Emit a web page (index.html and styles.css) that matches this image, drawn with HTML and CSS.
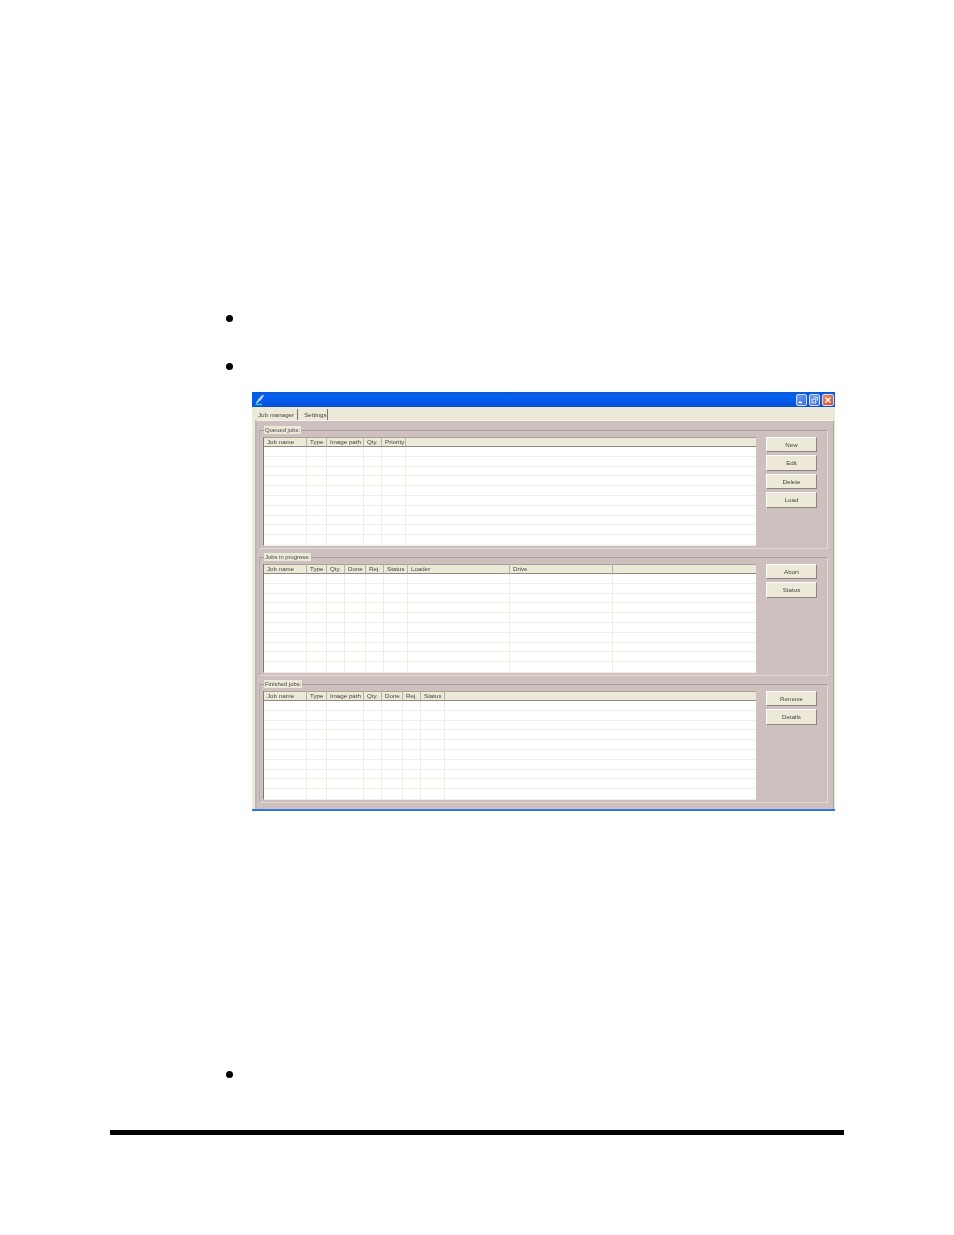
FILE: index.html
```html
<!DOCTYPE html>
<html lang="en">
<head>
    <meta charset="UTF-8">
    <meta name="viewport" content="width=device-width, initial-scale=1.0">
    <title>Job manager</title>
    <link rel="stylesheet" href="styles.css">
</head>
<body>

    <div class="page">
        <div class="bullet"></div>
        <div class="bullet"></div>

        <div class="window">
            <div class="title-bar">
                <!-- feather icon of the app -->
                <svg class="app-icon" width="10" height="12" viewBox="0 0 10 12">
                    <path d="M9 0.5 C6 1.5 3.5 4 2 8 L4 7.5 C6 6.5 8 4 9 0.5 Z" fill="#b9d4f2"/>
                    <path d="M3 7 L1.5 9.5" stroke="#e8f2fb" stroke-width="1.2"/>
                    <path d="M0.5 10.5 H7" stroke="#39c0c8" stroke-width="1.6"/>
                </svg>
                <div class="title-buttons">
                    <div class="title-btn">
                        <svg width="11" height="12" viewBox="0 0 11 12"><rect x="2" y="8" width="4" height="2" fill="#fff"/></svg>
                    </div>
                    <div class="title-btn">
                        <svg width="11" height="12" viewBox="0 0 11 12"><path d="M4.5 2.5 H9 V6.5 M2.5 5 H7 V9.5 H2.5 Z" fill="none" stroke="#fff"/></svg>
                    </div>
                    <div class="title-btn close">
                        <svg width="12" height="12" viewBox="0 0 12 12"><path d="M3 3 L9 9 M9 3 L3 9" stroke="#fff" stroke-width="1.6"/></svg>
                    </div>
                </div>
            </div>

            <div class="tabs">
                <div class="tab active">Job manager</div>
                <div class="tab">Settings</div>
            </div>

            <div class="pane">
                <fieldset class="group">
                    <legend>Queued jobs:</legend>
                    <div class="group-body">
                        <table class="job-table" id="queued"></table>
                        <div class="buttons">
                            <button>New</button>
                            <button>Edit</button>
                            <button>Delete</button>
                            <button>Load</button>
                        </div>
                    </div>
                </fieldset>

                <fieldset class="group">
                    <legend>Jobs in progress:</legend>
                    <div class="group-body">
                        <table class="job-table" id="progress"></table>
                        <div class="buttons">
                            <button>Abort</button>
                            <button>Status</button>
                        </div>
                    </div>
                </fieldset>

                <fieldset class="group">
                    <legend>Finished jobs:</legend>
                    <div class="group-body">
                        <table class="job-table" id="finished"></table>
                        <div class="buttons">
                            <button>Remove</button>
                            <button>Details</button>
                        </div>
                    </div>
                </fieldset>
            </div>
        </div>

        <div class="bullet last"></div>
        <div class="rule"></div>
    </div>

    <script>
        // name and width of each column, the last one takes the rest
        const tables = {
            queued: [['Job name', 43], ['Type', 20], ['Image path', 37], ['Qty.', 18], ['Priority', 24], ['', 0]],
            progress: [['Job name', 43], ['Type', 20], ['Qty.', 18], ['Done', 21], ['Rej.', 18], ['Status', 24], ['Loader', 102], ['Drive', 103], ['', 0]],
            finished: [['Job name', 43], ['Type', 20], ['Image path', 37], ['Qty.', 18], ['Done', 21], ['Rej.', 18], ['Status', 24], ['', 0]]
        };

        for (const id in tables) {
            const cols = tables[id];
            let html = '<thead><tr>';
            cols.forEach(function (col) {
                const width = col[1] ? ` style="width:${col[1]}px"` : '';
                html += `<th${width}>${col[0]}</th>`;
            });
            html += '</tr></thead><tbody>';
            for (let i = 0; i < 10; i++) {
                html += '<tr>' + '<td></td>'.repeat(cols.length) + '</tr>';
            }
            html += '</tbody>';
            document.getElementById(id).innerHTML = html;
        }
    </script>

</body>
</html>
```

FILE: styles.css
```css
body {
    margin: 0;
    background-color: #fff;
    font-family: "Liberation Sans", Arial, sans-serif;
}

.page {
    padding: 315px 110px 0;
}

.bullet {
    width: 7px;
    height: 7px;
    margin: 0 0 41px 116px;
    border-radius: 50%;
    background-color: #000;
}

.bullet.last {
    margin: 260px 0 0 116px;
}

.rule {
    height: 5px;
    margin-top: 52px;
    background-color: #000;
}

/* the screenshot of the program */
.window {
    width: 583px;
    height: 419px;
    margin: -19px 0 0 142px;
    box-sizing: border-box;
    background-color: #ece9d8;
    border-bottom: 2px solid #2f78d8;
    filter: blur(0.4px);
    color: #444;
    font-size: 6.2px;
}

.title-bar {
    display: flex;
    align-items: center;
    height: 15px;
    padding: 0 1px 0 3px;
    box-sizing: border-box;
    background: linear-gradient(#0a58d8, #0560f0 30%, #0458e8 70%, #0a4fd0);
}

.title-buttons {
    display: flex;
    gap: 2px;
    margin-left: auto;
}

.title-btn {
    display: flex;
    width: 11px;
    height: 12px;
    border: 1px solid #cfe0f8;
    border-radius: 2px;
    box-sizing: border-box;
    align-items: center;
    justify-content: center;
    background: linear-gradient(135deg, #6f9cec, #3a6fdc);
}

.title-btn.close {
    width: 12px;
    background: linear-gradient(135deg, #e88a68, #d0502c);
}

.tabs {
    display: flex;
    height: 13px;
    padding-left: 2px;
    box-sizing: border-box;
    align-items: center;
}

.tab {
    height: 11px;
    margin-top: 2px;
    padding-right: 1px;
    border-right: 1px solid #777;
    line-height: 11px;
    font-size: 6.2px;
}

.tab.active {
    padding: 0 3px 0 4px;
    margin-right: 6px;
}

.pane {
    height: 389px;
    padding: 6px 0 0;
    margin: 0 1px 0 3px;
    box-sizing: border-box;
    background-color: #cfc0c0;
    border-top: 1px solid #f4f2ea;
    border-left: 2px solid #bdb4bc;
    border-right: 1px solid #aca899;
}

.group {
    height: 123px;
    margin: -1px 5px 5px 2px;
    padding: 0 3px;
    box-sizing: border-box;
    border: 1px solid;
    border-color: #a89c9c #e2dad4 #e2dad4 #b8acac;
    min-width: 0;
}

.group legend {
    height: 8px;
    padding: 0 1px;
    margin-left: 1px;
    background-color: #ece9d8;
    line-height: 8px;
    font-size: 5.9px;
}

.group-body {
    display: flex;
    gap: 10px;
    padding-top: 3px;
}

.job-table {
    width: 493px;
    height: 108px;
    table-layout: fixed;
    border-collapse: separate;
    border-spacing: 0;
    background-color: #fff;
    border-left: 1px solid #807c70;
    border-bottom: 1px solid #f0eee4;
}

.job-table th {
    height: 10px;
    padding: 0 0 0 3px;
    box-sizing: border-box;
    overflow: hidden;
    white-space: nowrap;
    background-color: #ece9d8;
    border-top: 1px solid #a8a494;
    border-right: 1px solid #b8b4a4;
    border-bottom: 1px solid #8f8b7c;
    text-align: left;
    font-weight: normal;
    line-height: 8px;
    color: #444;
}

.job-table th:last-child,
.job-table td:last-child {
    border-right: none;
}

.job-table td {
    height: 9.8px;
    padding: 0;
    box-sizing: border-box;
    border-right: 1px solid #f0eee2;
    border-bottom: 1px solid #f0eee2;
}

.job-table tr:last-child td {
    border-bottom: none;
}

.buttons {
    display: flex;
    flex-direction: column;
    gap: 3px;
    margin-top: -0.5px;
}

.buttons button {
    width: 51px;
    height: 15.5px;
    padding: 0;
    background-color: #ece9d8;
    border: 1px solid;
    border-color: #fff #8a8678 #8a8678 #fff;
    font-family: inherit;
    font-size: 6.2px;
    color: #444;
}
```
